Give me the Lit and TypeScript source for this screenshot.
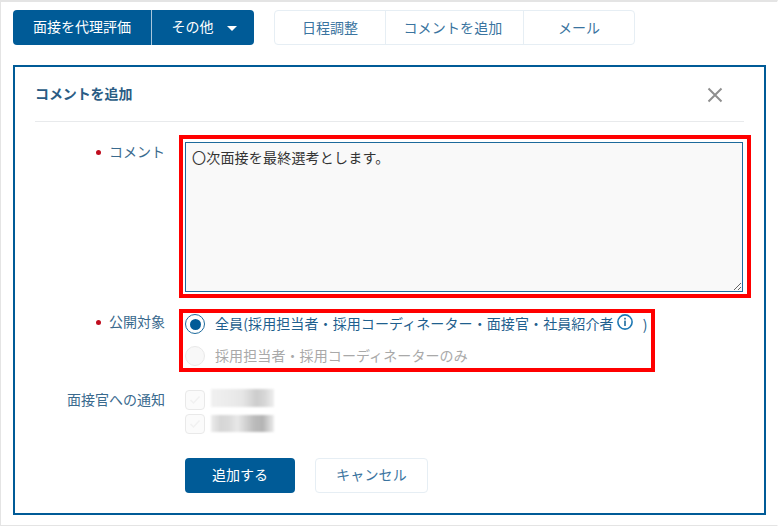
import { LitElement, html, css } from "lit";
import { customElement } from "lit/decorators.js";

@customElement("app-root")
export class AppRoot extends LitElement {
  static styles = css`
    :host {
      display: block;
      box-sizing: border-box;
      width: 778px;
      height: 526px;
      background: #fff;
      border: 1px solid #e4e4e4;
      border-top-width: 2px;
      border-right-color: #fff;
      padding: 8px 0 0 12px;
      font-family: "Noto Sans CJK JP", "Noto Sans", sans-serif;
      font-size: 14px;
      color: #2f6288;
      overflow: hidden;
    }
    .toolbar { display: flex; gap: 20px; height: 35px; }
    .group { display: flex; height: 35px; box-sizing: border-box; border-radius: 4px; align-items: stretch; }
    .group.primary { background: #005b97; color: #fff; width: 241px; }
    .group.secondary { background: #fff; border: 1px solid #e6eef4; width: 361px; color: #3a74a0; }
    .tb { display: flex; align-items: center; justify-content: center; line-height: 1; box-sizing: border-box; padding-bottom: 2px; }
    .primary .tb { padding-bottom: 4px; }
    .primary .a { width: 139px; border-right: 1px solid #a8c6dc; }
    .primary .b { flex: 1; gap: 13px; padding-left: 2px; }
    .caret { width: 0; height: 0; border-left: 5px solid transparent; border-right: 5px solid transparent; border-top: 5px solid #fff; margin-top: 5px; }
    .secondary .tb { border-right: 1px solid #e6eef4; }
    .secondary .tb:last-child { border-right: 0; }
    .s1 { width: 111px; }
    .s2 { width: 138px; padding-right: 3px; letter-spacing: 0.15px; }
    .s3 { flex: 1; }
    .panel {
      box-sizing: border-box;
      margin-top: 20px;
      width: 753px;
      height: 450px;
      border: 2px solid #005b97;
      padding: 0 20px;
    }
    .head {
      display: flex;
      justify-content: space-between;
      align-items: center;
      height: 55px;
      border-bottom: 1px solid #e8eaec;
      box-sizing: border-box;
    }
    .title { font-weight: 700; font-size: 14px; color: #2a5c84; letter-spacing: -0.1px; margin-top: -2px; }
    .close { display: block; margin: 2px 21px 0 0; }
    .row { display: grid; grid-template-columns: 130px 1fr; column-gap: 20px; }
    .label { box-sizing: border-box; padding-bottom: 2px; display: flex; justify-content: flex-end; align-items: center; height: 20px; gap: 8px; color: #3a6a8e; white-space: nowrap; }
    .req { width: 5px; height: 5px; border-radius: 50%; background: #c00d1e; margin-top: 2px; }
    .row.c { margin-top: 20px; height: 150px; }
    .mark { position: relative; }
    .mark::after {
      content: "";
      position: absolute;
      box-sizing: border-box;
      border: 4px solid #ff0000;
      pointer-events: none;
    }
    .mark-a { height: 150px; }
    .mark-a::after { top: -7px; left: -6px; right: -7px; bottom: -6px; }
    textarea {
      display: block;
      box-sizing: border-box;
      width: 558px;
      height: 150px;
      margin: 0;
      padding: 4px 6px;
      border: 1px solid #1d6a9c;
      background: #f9f9f9;
      border-radius: 0;
      color: #333;
      font: 14px/20px "Noto Sans CJK JP", "Noto Sans", sans-serif;
      letter-spacing: 0.2px;
      outline: none;
    }
    .row.r { margin-top: 20px; height: 60px; }
    .mark-b {
      width: 466px;
      height: 60px;
      box-sizing: border-box;
      display: flex;
      flex-direction: column;
      gap: 12px;
      padding-top: 2px;
    }
    .mark-b::after { top: -3px; left: -6px; right: -4px; bottom: 0; }
    .radio { display: flex; align-items: center; height: 20px; color: #1f5f8e; white-space: nowrap; letter-spacing: 0.1px; }
    .radio .txt { margin-left: 10px; padding-bottom: 2px; }
    .radio.off { color: #a9a9a9; }
    .dot { box-sizing: border-box; width: 20px; height: 20px; border-radius: 50%; border: 1.5px solid #1d6a9c; display: flex; align-items: center; justify-content: center; flex: none; }
    .dot i { width: 11px; height: 11px; border-radius: 50%; background: #005b97; display: block; }
    .radio.off .dot { border-color: #e9e9e9; background: #f8f8f8; }
    .info { margin: -4px 0 0 3px; flex: none; }
    .paren { margin-left: 10px; padding-bottom: 1px; }
    .row.n { margin-top: 18px; }
    .checks { display: flex; flex-direction: column; gap: 4px; }
    .check { display: flex; gap: 6px; height: 20px; align-items: flex-start; }
    .box { width: 20px; height: 20px; box-sizing: border-box; border: 1.5px solid #e9e9e9; border-radius: 4px; background: #fbfbfb; display: flex; align-items: center; justify-content: center; flex: none; }
    .blur { width: 63px; filter: blur(1px); }
    .blur.one { height: 18px; margin-top: -1px; background: linear-gradient(90deg, #f0f0f0, #ebebeb 30%, #e6e6e6 50%, #cdcdcd 72%, #d6d6d6 85%, #efefef); }
    .blur.two { height: 17px; margin-top: 1px; background: linear-gradient(90deg, #ececec, #d6d6d6 15%, #dadada 28%, #e8e8e8 42%, #bcbcbc 68%, #b4b4b4 82%, #ececec); }
    .actions { display: flex; gap: 20px; margin: 24px 0 0 150px; }
    .btn { height: 35px; border-radius: 4px; display: flex; align-items: center; justify-content: center; box-sizing: border-box; padding-bottom: 3px; }
    .btn.ok { width: 110px; background: #005b97; color: #fff; }
    .btn.no { width: 113px; background: #fff; border: 1px solid #e6eef4; color: #3a74a0; letter-spacing: 0.2px; }
  `;

  render() {
    const tick = html`<svg width="12" height="10" viewBox="0 0 12 10"><path d="M1.5 5l3 3 6-6.5" fill="none" stroke="#f1f1f1" stroke-width="1.5"/></svg>`;
    return html`
      <div class="toolbar">
        <div class="group primary">
          <div class="tb a">面接を代理評価</div>
          <div class="tb b">その他<span class="caret"></span></div>
        </div>
        <div class="group secondary">
          <div class="tb s1">日程調整</div>
          <div class="tb s2">コメントを追加</div>
          <div class="tb s3">メール</div>
        </div>
      </div>
      <div class="panel">
        <div class="head">
          <div class="title">コメントを追加</div>
          <svg class="close" width="16" height="16" viewBox="0 0 16 16"><path d="M1.5 1.5l13 13M14.5 1.5l-13 13" stroke="#8f8f8f" stroke-width="2" fill="none"/></svg>
        </div>
        <div class="row c">
          <div class="label"><span class="req"></span>コメント</div>
          <div class="mark mark-a"><textarea .value=${"〇次面接を最終選考とします。"}></textarea></div>
        </div>
        <div class="row r">
          <div class="label"><span class="req"></span>公開対象</div>
          <div class="mark mark-b">
            <div class="radio"><span class="dot"><i></i></span><span class="txt">全員(採用担当者・採用コーディネーター・面接官・社員紹介者</span><svg class="info" width="16" height="16" viewBox="0 0 16 16"><circle cx="8" cy="8" r="7.1" fill="none" stroke="#1d78b4" stroke-width="1.6"/><rect x="7.2" y="6.6" width="1.6" height="5.4" fill="#1d6a9c"/><rect x="7.2" y="3.8" width="1.6" height="1.7" fill="#1d6a9c"/></svg><span class="paren">)</span></div>
            <div class="radio off"><span class="dot"></span><span class="txt">採用担当者・採用コーディネーターのみ</span></div>
          </div>
        </div>
        <div class="row n">
          <div class="label">面接官への通知</div>
          <div class="checks">
            <div class="check"><span class="box">${tick}</span><span class="blur one"></span></div>
            <div class="check"><span class="box">${tick}</span><span class="blur two"></span></div>
          </div>
        </div>
        <div class="actions">
          <div class="btn ok">追加する</div>
          <div class="btn no">キャンセル</div>
        </div>
      </div>
    `;
  }
}
